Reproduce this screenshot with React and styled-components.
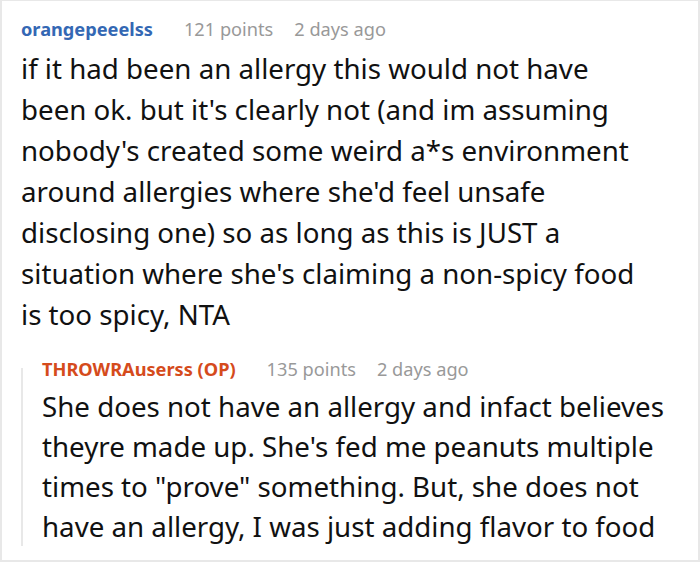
import styled, { createGlobalStyle } from 'styled-components';

const GlobalStyle = createGlobalStyle`
    html, body {
        margin: 0;
        padding: 0;
        background: #ffffff;
    }
`

const Frame = styled.div`
    width: 700px;
    height: 562px;
    box-sizing: border-box;
    border: 2px solid #e8e8e8;
    border-top-width: 1px;
    background: #ffffff;
    overflow: hidden;
    padding: 15px 0 0 19px;
    font-family: "Noto Sans", "Open Sans", sans-serif;
`

const Comment = styled.div`
    display: flex;
    flex-direction: column;
`

const Meta = styled.div`
    display: flex;
    align-items: baseline;
    gap: 21px;
    height: 26px;
    margin-top: ${props => props.pull || 0}px;
    font-size: 18.2px;
    line-height: 26px;
    color: #999999;
`

const Author = styled.span`
    margin-right: 10px;
    font-weight: 700;
    color: ${props => props.op ? '#d54b1c' : '#3468b4'};
`

const Body = styled.p`
    margin: ${props => props.top}px 0 0;
    color: #111111;
    font-size: 27.7px;
    line-height: ${props => props.lh}px;
`

const Reply = styled.div`
    display: flex;
    flex-direction: column;
    margin-top: 33px;
    border-left: 2px solid #e8e8e8;
    padding-left: 19px;
`

const App = () => (
    <>
        <GlobalStyle />
        <Frame>
            <Comment>
                <Meta>
                    <Author>orangepeeelss</Author>
                    <span>121 points</span>
                    <span>2 days ago</span>
                </Meta>
                <Body top={6} lh={41}>
                    if it had been an allergy this would not have<br />
                    been ok. but it's clearly not (and im assuming<br />
                    nobody's created some weird a*s environment<br />
                    around allergies where she'd feel unsafe<br />
                    disclosing one) so as long as this is JUST a<br />
                    situation where she's claiming a non-spicy food<br />
                    is too spicy, NTA
                </Body>
                <Reply>
                    <Meta pull={-12}>
                        <Author op>THROWRAuserss (OP)</Author>
                        <span>135 points</span>
                        <span>2 days ago</span>
                    </Meta>
                    <Body top={4} lh={40}>
                        She does not have an allergy and infact believes<br />
                        theyre made up. She's fed me peanuts multiple<br />
                        times to "prove" something. But, she does not<br />
                        have an allergy, I was just adding flavor to food
                    </Body>
                </Reply>
            </Comment>
        </Frame>
    </>
);

export default App;
